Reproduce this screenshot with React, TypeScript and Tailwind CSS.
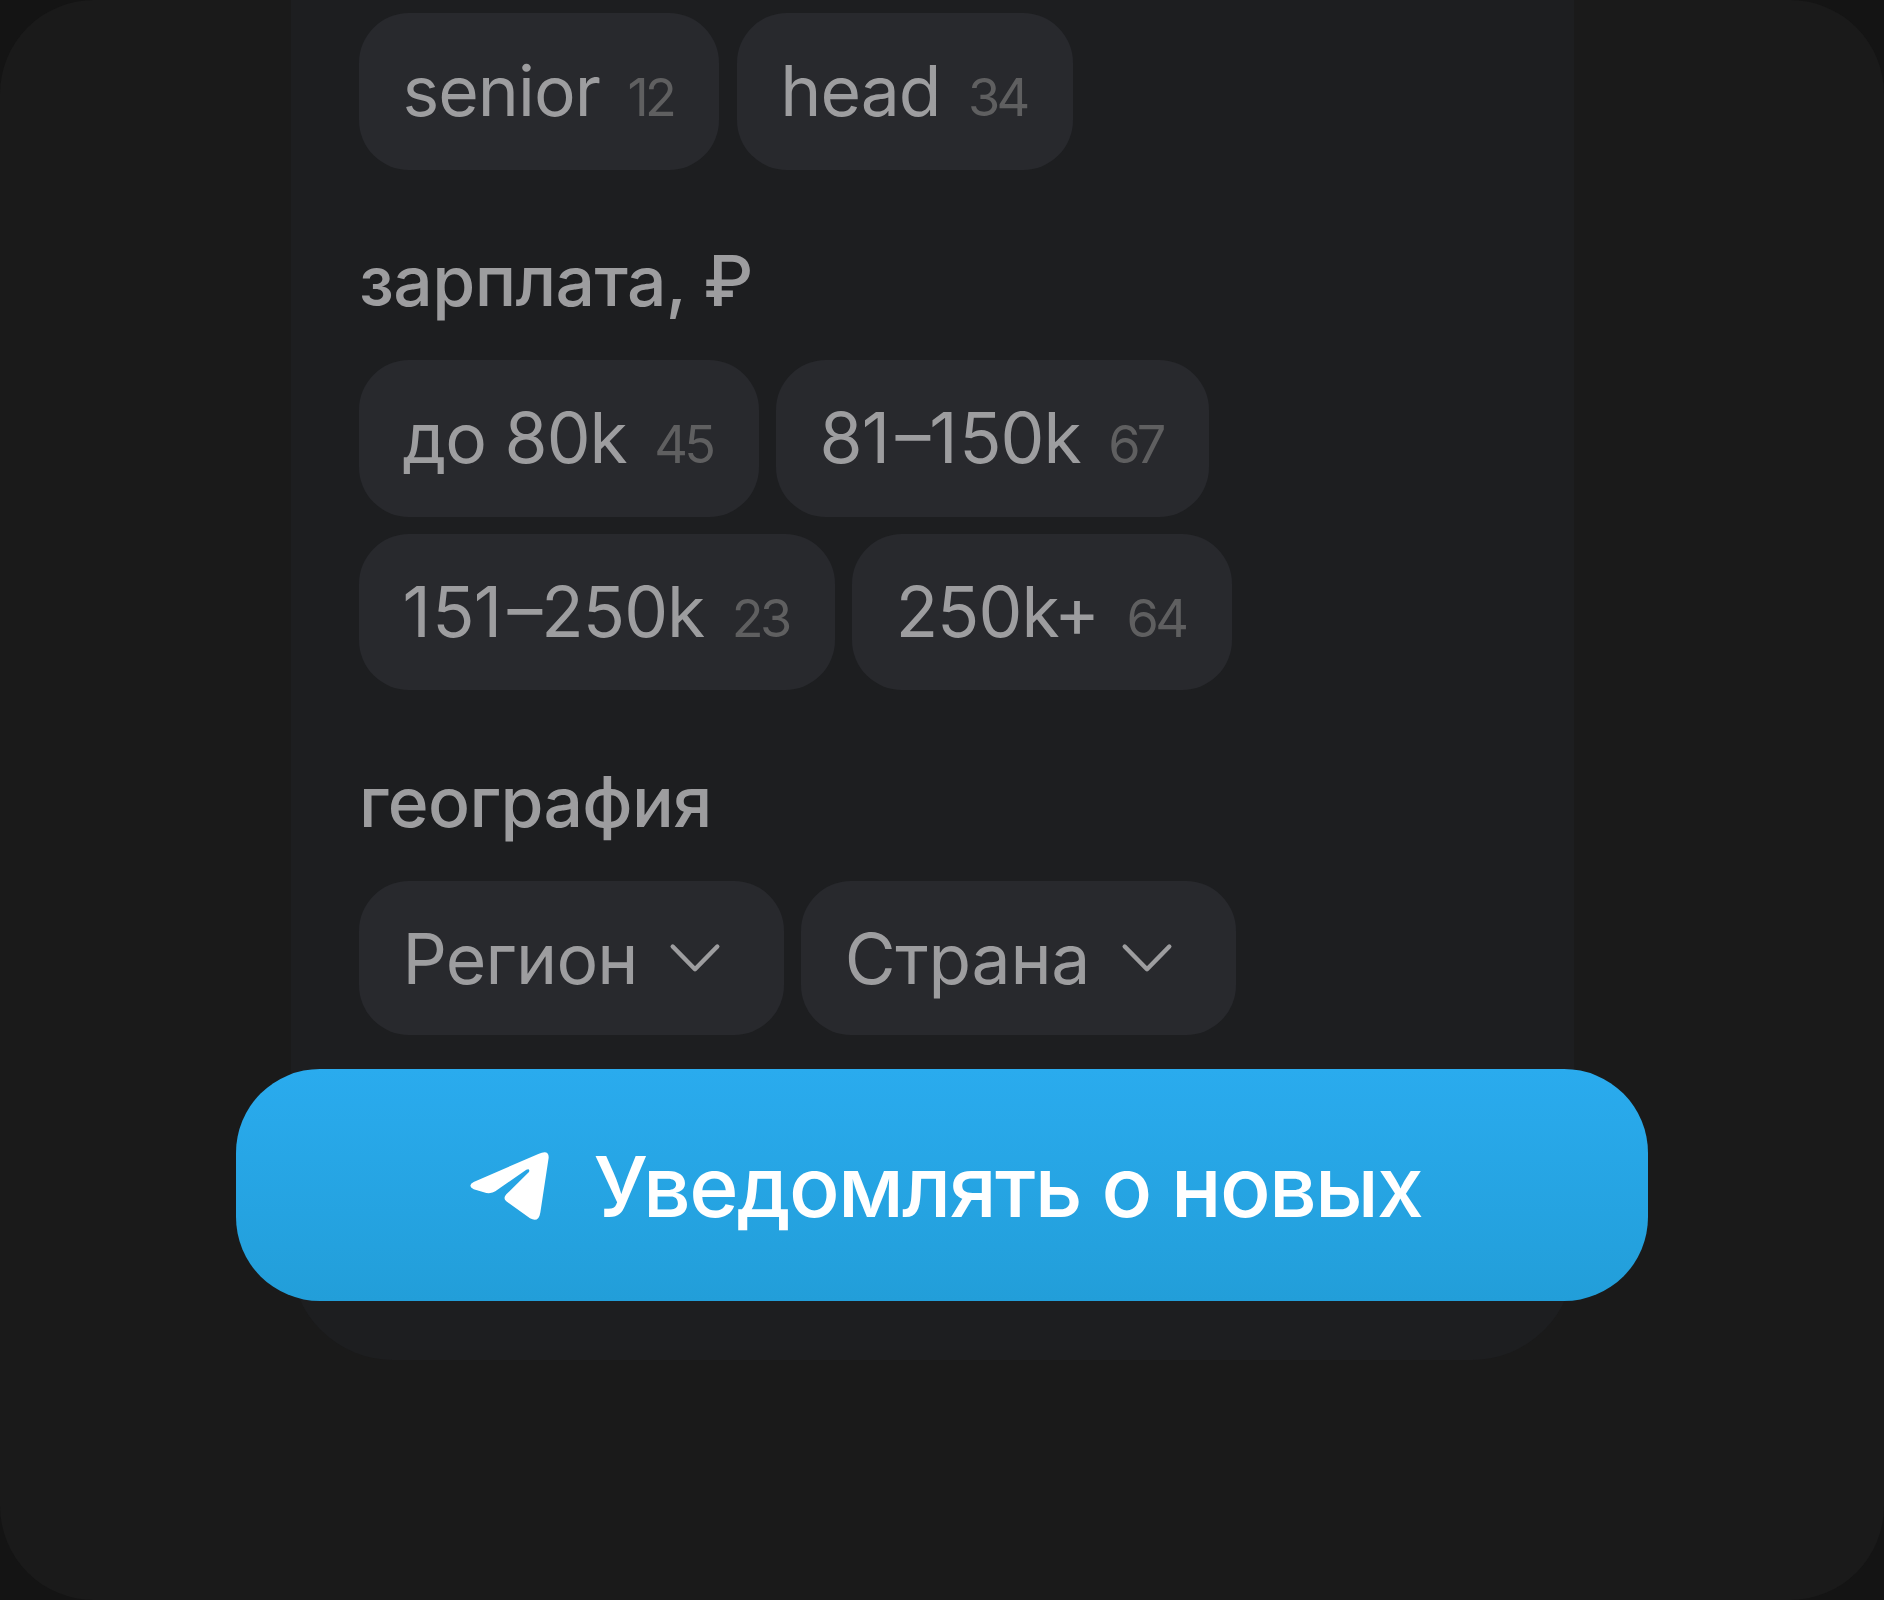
import React from 'react';

type Option = { label: string; count: number };

const levels: Option[] = [
  { label: 'senior', count: 12 },
  { label: 'head', count: 34 },
];

const salaries: Option[] = [
  { label: 'до 80k', count: 45 },
  { label: '81–150k', count: 67 },
  { label: '151–250k', count: 23 },
  { label: '250k+', count: 64 },
];

const places = [
  { label: 'Регион', tracking: 'tracking-[-0.012em]' },
  { label: 'Страна', tracking: 'tracking-[-0.004em]' },
];

// Optical spacing for ones, the range dash and the "k+" pair
const Label: React.FC<{ text: string }> = ({ text }) => (
  <span className="tracking-[-0.014em]">
    {text.split(/([1–]|k(?=\+))/).map((part, i) => {
      if (part === '1') return <span key={i} className="mr-[2.5px]">{part}</span>;
      if (part === '–') return <span key={i} className="ml-[4px] [font-feature-settings:'case']">{part}</span>;
      if (part === 'k') return <span key={i} className="tracking-[-0.08em]">{part}</span>;
      return part;
    })}
  </span>
);

const Chip: React.FC<Option> = ({ label, count }) => (
  <button className="flex h-[156.5px] items-baseline rounded-[50px] bg-[#28292d] pl-[43.5px] pr-[46.2px] text-[69.6px] leading-[156px]">
    <Label text={label} />
    <span className="pl-[27.5px] text-[52.2px] tracking-[-0.07em] text-[#5f5f60]">{count}</span>
  </button>
);

const Dropdown: React.FC<{ label: string; tracking: string }> = ({ label, tracking }) => (
  <button className="flex h-[154px] items-center gap-[31px] rounded-[50px] bg-[#28292d] pl-[43.5px] pr-[63.3px] text-[69.6px] leading-[154px]">
    <span className={`pt-[1.5px] ${tracking}`}>{label}</span>
    <svg width="52" height="32" viewBox="0 0 52 32" fill="none">
      <path d="M3.7 4.5L26 27.2L48.3 4.5" stroke="currentColor" strokeWidth="4.4" strokeLinecap="round" strokeLinejoin="round" />
    </svg>
  </button>
);

const TelegramIcon: React.FC = () => (
  <svg className="mt-[3.5px]" width="79.3" height="68.3" viewBox="31 66 238 205" fill="white">
    <path d="M42 156L236 72Q269 58 267 84L242 248Q237 279 211 265L140 214Q129 205 140 193L208 126Q212 115 200 119L107 184Q98 191 80 189L42 178Q22 167 42 156Z" />
  </svg>
);

const App: React.FC = () => {
  return (
    <div className="h-[1600px] w-[1884px] overflow-hidden bg-[#141414] font-['Inter',sans-serif]">
      <div className="relative h-full rounded-[94px] bg-[#1a1a1a] pl-[290.5px]">
        <div className="h-[1360px] w-[1283.5px] rounded-b-[102px] bg-[#1d1e20] px-[68.5px] pt-[13px] text-[#9d9d9f]">
          <div className="flex gap-[17.4px]">
            {levels.map((item) => (
              <Chip key={item.label} {...item} />
            ))}
          </div>

          <h2 className="pt-[68.5px] text-[69.6px] font-medium leading-[87px] tracking-[-0.009em]">зарплата, ₽</h2>
          <div className="flex w-[900px] flex-wrap gap-[17.4px] pt-[35px]">
            {salaries.map((item) => (
              <Chip key={item.label} {...item} />
            ))}
          </div>

          <h2 className="pt-[68.5px] text-[69.6px] font-medium leading-[87px] tracking-[-0.009em]">география</h2>
          <div className="flex gap-[17.4px] pt-[35px]">
            {places.map((place) => (
              <Dropdown key={place.label} {...place} />
            ))}
          </div>
        </div>

        {/* Floating subscribe button */}
        <button className="absolute left-[236px] top-[1068.8px] flex h-[231.9px] w-[1412px] items-center rounded-[84px] bg-linear-to-b from-[#2aabee] to-[#229ed9] pl-[233.7px] text-[84px] font-medium text-white">
          <TelegramIcon />
          <span className="pl-[44.5px] pt-[5px] leading-[104px] tracking-[-0.0205em] whitespace-nowrap">Уведомлять о новых</span>
        </button>
      </div>
    </div>
  );
};

export default App;
